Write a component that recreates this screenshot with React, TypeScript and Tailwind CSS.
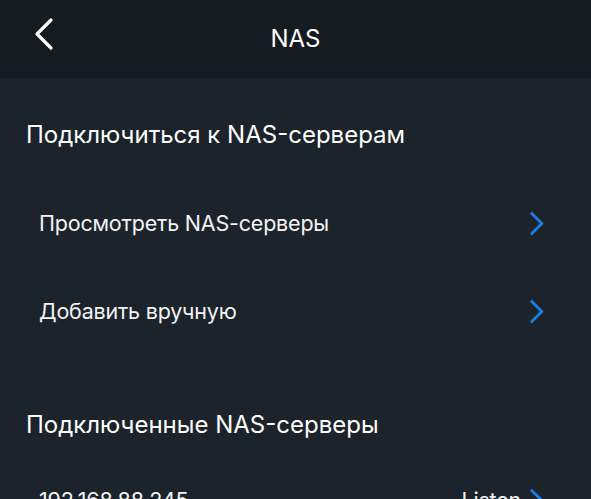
const Chevron = ({ className }: { className?: string }) => (
  <svg viewBox="0 0 16 26" className={className} fill="none">
    <path
      d="M2.5 2.5 L13 13 L2.5 23.5"
      stroke="currentColor"
      strokeWidth="3"
      strokeLinecap="round"
      strokeLinejoin="round"
    />
  </svg>
);

const Row = ({ label, value }: { label: string; value?: string }) => (
  <div className="flex h-[88px] items-center justify-between pl-[39px] pr-[46px]">
    <span className="text-[21.5px] tracking-[-0.2px] text-[#f2f3f5]">{label}</span>
    <div className="flex items-center gap-[8px]">
      {value && <span className="text-[21.5px] tracking-[-0.2px] text-[#f2f3f5]">{value}</span>}
      <Chevron className="h-[25px] w-[16px] text-[#1a7fe3]" />
    </div>
  </div>
);

export default function App() {
  return (
    <div
      className="flex h-[499px] w-[591px] flex-col overflow-hidden bg-[#1c232b]"
      style={{ fontFamily: 'Inter, "Liberation Sans", Arial, sans-serif' }}
    >
      <header className="relative flex h-[78px] shrink-0 items-center justify-center bg-[#161a21]">
        <button className="absolute left-[33px] top-[17px] text-white">
          <svg viewBox="0 0 22 34" className="h-[34px] w-[22px]" fill="none">
            <path
              d="M18 3 L4 17 L18 31"
              stroke="currentColor"
              strokeWidth="3.2"
              strokeLinecap="round"
              strokeLinejoin="round"
            />
          </svg>
        </button>
        <h1 className="text-[24px] text-white">NAS</h1>
      </header>

      <section>
        <h2 className="mt-[41px] h-[32px] pl-[26px] text-[24px] leading-[32px] text-white">
          Подключиться к NAS-серверам
        </h2>
        <div className="mt-[28px]">
          <Row label="Просмотреть NAS-серверы" />
          <Row label="Добавить вручную" />
        </div>
      </section>

      <section>
        <h2 className="mt-[54px] h-[32px] pl-[26px] text-[24px] leading-[32px] text-white">
          Подключенные NAS-серверы
        </h2>
        <div className="mt-[15px]">
          <Row label="192.168.88.245" value="Listen" />
        </div>
      </section>
    </div>
  );
}
